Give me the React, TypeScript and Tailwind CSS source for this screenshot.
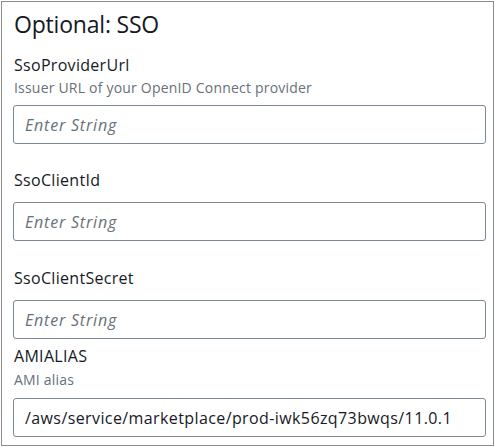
import React from "react";

const font = { fontFamily: '"Open Sans", "Noto Sans", sans-serif' };

function Field({ placeholder, value }: { placeholder?: string; value?: string }) {
  return (
    <div className="h-[39px] w-[473px] rounded-[3px] border border-[#7d8998] bg-white px-[11px] flex items-center">
      {value ? (
        <span className="text-[16px] leading-[22px] tracking-[0.4px] text-[#16191f] whitespace-nowrap">{value}</span>
      ) : (
        <span className="text-[16px] leading-[22px] tracking-[0.8px] italic text-[#687078]">{placeholder}</span>
      )}
    </div>
  );
}

export default function App() {
  return (
    <div className="w-[495px] h-[447px] bg-white p-px" style={font}>
      <div className="w-[493px] h-[445px] border border-[#8c8c8c] pl-[11px] pt-[7px] flex flex-col">
        <div className="text-[23px] leading-[30px] tracking-[-0.2px] text-[#16191f] pl-px">Optional: SSO</div>
        <div className="mt-[15px] text-[16px] leading-[22px] tracking-[0.3px] text-[#16191f] pl-px">SsoProviderUrl</div>
        <div className="mt-[2px] text-[14px] leading-[20px] tracking-[0.2px] text-[#687078] pl-px">Issuer URL of your OpenID Connect provider</div>
        <div className="mt-[7px]"><Field placeholder="Enter String" /></div>
        <div className="mt-[25px] text-[16px] leading-[22px] tracking-[0.3px] text-[#16191f] pl-px">SsoClientId</div>
        <div className="mt-[11px]"><Field placeholder="Enter String" /></div>
        <div className="mt-[26px] text-[16px] leading-[22px] tracking-[0.3px] text-[#16191f] pl-px">SsoClientSecret</div>
        <div className="mt-[11px]"><Field placeholder="Enter String" /></div>
        <div className="mt-[6px] text-[16px] leading-[22px] tracking-[0.3px] text-[#16191f] pl-px">AMIALIAS</div>
        <div className="mt-[3px] text-[14px] leading-[20px] tracking-[0.2px] text-[#687078] pl-px">AMI alias</div>
        <div className="mt-[8px]"><Field value="/aws/service/marketplace/prod-iwk56zq73bwqs/11.0.1" /></div>
      </div>
    </div>
  );
}
